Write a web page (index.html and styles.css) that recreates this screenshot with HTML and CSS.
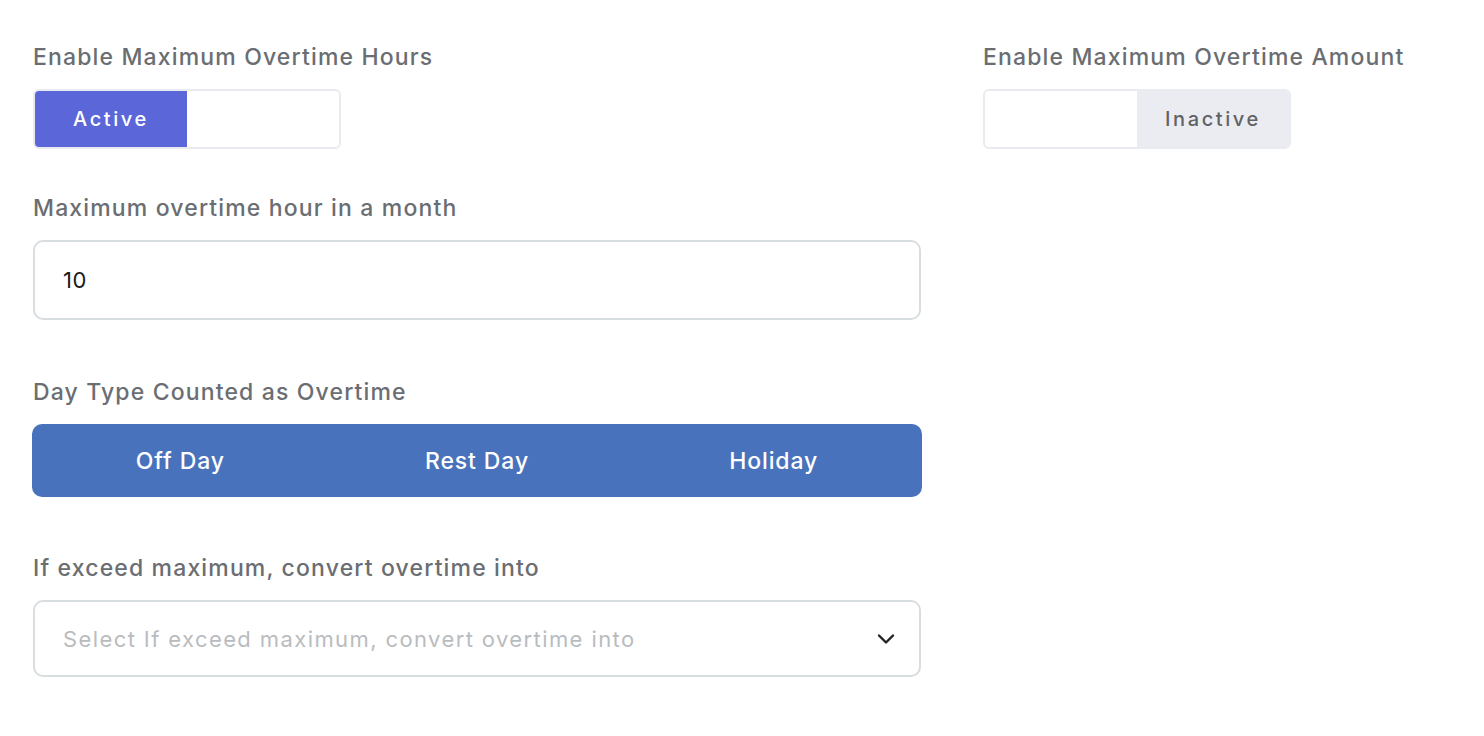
FILE: index.html
```html
<!DOCTYPE html>
<html>
<head>
<meta charset="utf-8">
<link rel="stylesheet" href="styles.css">
</head>
<body>
<div class="page">
  <div class="col-main">
    <div class="field field-toggle">
      <div class="label">Enable Maximum Overtime Hours</div>
      <div class="toggle">
        <div class="toggle-half on">Active</div>
        <div class="toggle-half"></div>
      </div>
    </div>
    <div class="field field-input">
      <div class="label">Maximum overtime hour in a month</div>
      <div class="input">10</div>
    </div>
    <div class="field field-days">
      <div class="label">Day Type Counted as Overtime</div>
      <div class="daybar">
        <div class="day">Off Day</div>
        <div class="day">Rest Day</div>
        <div class="day">Holiday</div>
      </div>
    </div>
    <div class="field field-select">
      <div class="label">If exceed maximum, convert overtime into</div>
      <div class="select">
        <span class="placeholder">Select If exceed maximum, convert overtime into</span>
        <svg class="chev" width="18" height="12" viewBox="0 0 18 12"><path d="M2 2.5 L9 9.5 L16 2.5" fill="none" stroke="#222" stroke-width="2.4" stroke-linecap="round" stroke-linejoin="round"/></svg>
      </div>
    </div>
  </div>
  <div class="col-side">
    <div class="field field-toggle">
      <div class="label">Enable Maximum Overtime Amount</div>
      <div class="toggle">
        <div class="toggle-half"></div>
        <div class="toggle-half off">Inactive</div>
      </div>
    </div>
  </div>
</div>
</body>
</html>
```

FILE: styles.css
```css
* { box-sizing: border-box; }
html, body { margin: 0; padding: 0; background: #fff; }
body {
  font-family: Inter, "Noto Sans", "Liberation Sans", sans-serif;
  color: #696d71;
}
.page {
  display: grid;
  grid-template-columns: 888px 1fr;
  column-gap: 62px;
  padding: 41px 0 0 33px;
}
.label {
  font-size: 23px;
  font-weight: 500;
  color: #6a6e72;
  line-height: 32px;
  letter-spacing: 1.15px;
}
.field-toggle .label { margin-bottom: 16px; }
.toggle {
  width: 308px;
  height: 60px;
  border: 2px solid #eaebf0;
  border-radius: 6px;
  display: flex;
  overflow: hidden;
}
.toggle-half {
  flex: 1;
  display: flex;
  align-items: center;
  justify-content: center;
  font-size: 20px;
  font-weight: 500;
  letter-spacing: 2.6px;
}
.toggle-half.on { background: #5b67d8; color: #fff; }
.toggle-half.off { background: #ebecf1; color: #5f6367; }

.field-input { margin-top: 43px; }
.field-input .label { margin-bottom: 16px; }
.input {
  height: 80px;
  border: 2px solid #d8dde0;
  border-radius: 10px;
  display: flex;
  align-items: center;
  padding-left: 28px;
  font-size: 22px;
  color: #1a1a1a;
  letter-spacing: 0.5px;
}

.field-days { margin-top: 56px; }
.field-days .label { margin-bottom: 16px; }
.daybar {
  margin-left: -1px;
  margin-right: -1px;
  height: 73px;
  background: #4872bc;
  border-radius: 10px;
  display: grid;
  grid-template-columns: 1fr 1fr 1fr;
}
.day {
  display: flex;
  align-items: center;
  justify-content: center;
  color: #fff;
  font-size: 23px;
  font-weight: 500;
  letter-spacing: 0.9px;
}

.field-select { margin-top: 55px; }
.field-select .label { margin-bottom: 16px; }
.select {
  height: 77px;
  border: 2px solid #d8dde0;
  border-radius: 10px;
  display: flex;
  align-items: center;
  justify-content: space-between;
  padding: 0 24px 0 28px;
  font-size: 22px;
}
.placeholder { color: #b9bcbf; letter-spacing: 1.4px; }
.chev { display: block; }
```
